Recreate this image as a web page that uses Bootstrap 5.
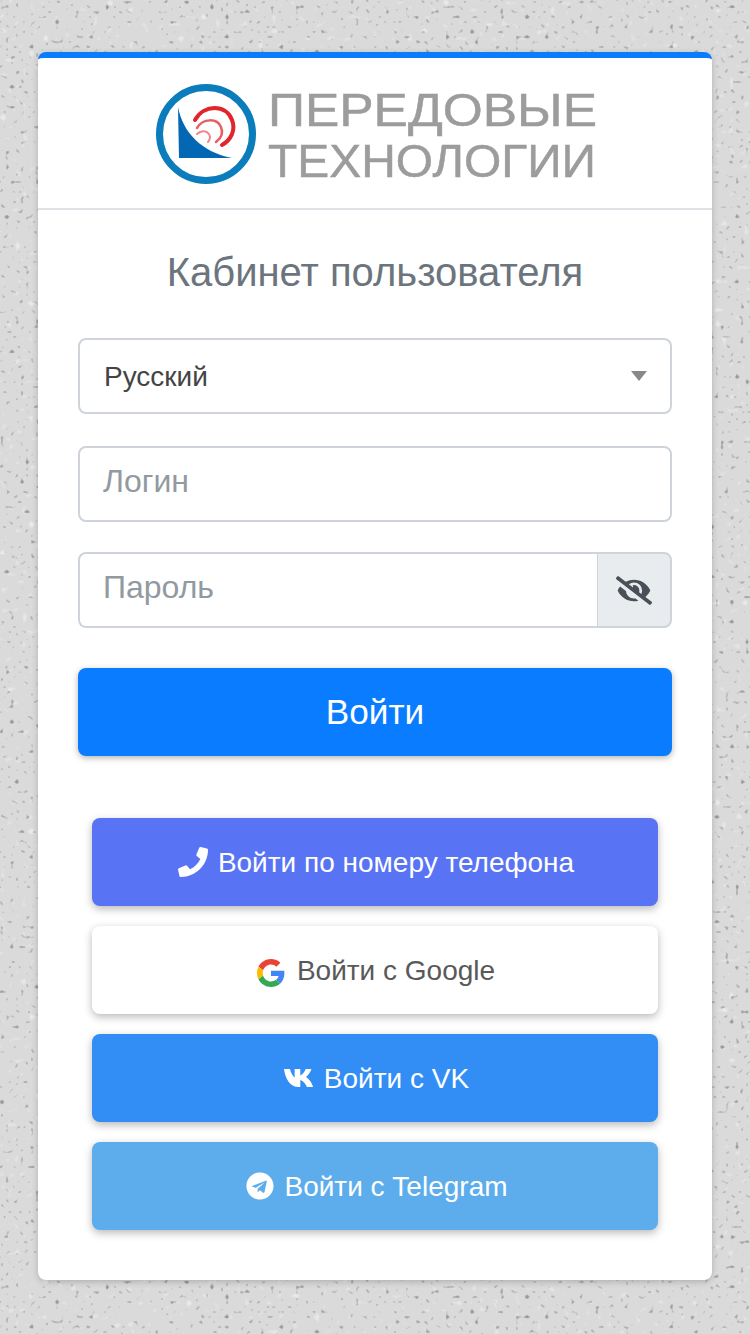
<!DOCTYPE html>
<html lang="ru">
<head>
  <meta charset="UTF-8">
  <meta name="viewport" content="width=device-width, initial-scale=1">
  <title>Кабинет пользователя</title>
  <link href="https://cdn.jsdelivr.net/npm/bootstrap@5.3.0/dist/css/bootstrap.min.css" rel="stylesheet">
  <style>
    html, body { height: 100%; }
    body {
      font-family: "Liberation Sans", Arial, sans-serif;
      background-color: #dadada;
      /* speckled concrete texture: thresholded svg noise */
      background-image: url("data:image/svg+xml,%3csvg xmlns='http://www.w3.org/2000/svg' width='750' height='1334'%3e%3cfilter id='d' color-interpolation-filters='sRGB' x='0' y='0' width='100%25' height='100%25'%3e%3cfeTurbulence type='fractalNoise' baseFrequency='.2' numOctaves='1' seed='11'/%3e%3cfeColorMatrix values='0 0 0 0 .5 0 0 0 0 .5 0 0 0 0 .5 7 0 0 0 -4.55'/%3e%3c/filter%3e%3cfilter id='l' color-interpolation-filters='sRGB' x='0' y='0' width='100%25' height='100%25'%3e%3cfeTurbulence type='fractalNoise' baseFrequency='.14' numOctaves='1' seed='4'/%3e%3cfeColorMatrix values='0 0 0 0 1 0 0 0 0 1 0 0 0 0 1 0 6 0 0 -3.9'/%3e%3c/filter%3e%3crect width='750' height='1334' filter='url(%23l)' opacity='.45'/%3e%3crect width='750' height='1334' filter='url(%23d)' opacity='.7'/%3e%3c/svg%3e");
    }
    .login-wrap { padding: 52px 38px 0; }
    .login-card {
      border: 0;
      border-top: 6px solid #0a7cff;
      border-radius: 8px;
      box-shadow: 0 2px 6px rgba(0,0,0,.2);
    }
    .login-head {
      background: #fff;
      border-bottom: 2px solid #dee2e6;
      padding: 22px 0 18px 6px;
      text-align: center;
    }
    .login-head svg { display: block; margin: 0 auto; }
    .logo-art { filter: blur(.6px); }
    .logo-text {
      font-family: "Liberation Sans", Arial, sans-serif;
      font-size: 47px;
      fill: #9c9c9c;
      stroke: #9c9c9c;
      stroke-width: .5px;
    }
    .login-body { padding: 39px 40px 50px; }
    .login-title {
      color: #6c757d;
      font-size: 40px;
      font-weight: 400;
      line-height: 46px;
      text-align: center;
      margin-bottom: 43px;
    }
    .field {
      height: 76px;
      font-size: 32px;
      padding: 0 23px 6px;
      border: 2px solid #ced4da;
      border-radius: 8px;
      color: #444;
    }
    .field::placeholder { color: #929aa1; opacity: 1; }
    .lang-select {
      font-size: 28px;
      padding: 2px 24px 0;
      margin-bottom: 32px;
      background-image: url("data:image/svg+xml,%3csvg xmlns='http://www.w3.org/2000/svg' viewBox='0 0 16 10'%3e%3cpath fill='%23888' d='M0 0h16L8 10z'/%3e%3c/svg%3e");
      background-position: right 23px center;
      background-size: 16px 10px;
    }
    .login-input { margin-bottom: 30px; }
    .eye-addon {
      width: 76px;
      height: 76px;
      justify-content: center;
      padding: 0;
      background: #e9ecef;
      border: 2px solid #ced4da;
      border-radius: 0 8px 8px 0;
    }
    .pass-group { margin-bottom: 40px; }
    .pass-group .field { border-right: 0; }
    .btn-enter {
      height: 88px;
      font-size: 35.2px;
      color: #fff;
      background: #0a7cff;
      border: 0;
      border-radius: 8px;
      box-shadow: 0 2px 6px rgba(0,0,0,.3);
      margin-bottom: 62px;
    }
    .social-list { padding: 0 14px; gap: 20px; }
    .btn-social {
      height: 88px;
      font-size: 28px;
      border: 0;
      border-radius: 8px;
      box-shadow: 0 3px 8px rgba(0,0,0,.28);
      color: #fff;
      gap: 10px;
      padding: 0 0 0 2px;
    }
    .btn-social span { margin-top: 2px; }
    .btn-phone { background: #5874f5; }
    .btn-google { background: #fff; color: #595959; gap: 12px; }
    .btn-google svg { margin-top: 6px; }
    .btn-vk { background: #328df5; }
    .btn-tg { background: #5dadec; padding-left: 4px; }
  </style>
</head>
<body>

  <div class="login-wrap">
    <div class="card login-card overflow-hidden">

      <!-- Logo -->
      <div class="login-head">
        <svg width="444" height="110" viewBox="156 80 444 110">
          <g class="logo-art">
            <circle cx="206" cy="134" r="46.5" fill="none" stroke="#0b7cbc" stroke-width="7"/>
            <path d="M178 107C183 133 202 152 232 158H179z" fill="#0467b3"/>
            <g fill="none" stroke="#e2252b" stroke-linecap="round">
              <path d="M195 120C204 104 226 104 232 120C236 130 231 140 222 145" stroke-width="4"/>
              <path d="M197 128C203 118 217 118 221 127C224 134 220 139 216 142" stroke-width="2.5" opacity=".75"/>
              <path d="M197 134C202 129 209 131 210 137C210 139 209 141 208 142" stroke-width="2" opacity=".55"/>
            </g>
            <text class="logo-text" x="268" y="125.5" textLength="329" lengthAdjust="spacingAndGlyphs">ПЕРЕДОВЫЕ</text>
            <text class="logo-text" x="268" y="177" textLength="328" lengthAdjust="spacingAndGlyphs">ТЕХНОЛОГИИ</text>
          </g>
        </svg>
      </div>

      <div class="login-body">
        <h1 class="login-title">Кабинет пользователя</h1>

        <select class="form-select field lang-select">
          <option>Русский</option>
        </select>

        <input type="text" class="form-control field login-input" placeholder="Логин">

        <div class="input-group pass-group">
          <input type="password" class="form-control field" placeholder="Пароль">
          <span class="input-group-text eye-addon">
            <svg width="36" height="29" viewBox="0 0 640 512" fill="#495057"><path d="M320 400c-75.85 0-137.25-58.71-142.9-133.11L72.2 185.82c-13.79 17.3-26.48 35.59-36.72 55.59a32.35 32.35 0 0 0 0 29.19C89.71 376.41 197.07 448 320 448c26.91 0 52.87-4 77.89-10.46L346 397.39a144.13 144.13 0 0 1-26 2.61zm313.82 58.1l-110.55-85.44a331.25 331.25 0 0 0 81.25-102.07 32.35 32.35 0 0 0 0-29.19C550.29 135.59 442.93 64 320 64a308.15 308.15 0 0 0-147.32 37.7L45.46 3.37A16 16 0 0 0 23 6.18L3.37 31.45A16 16 0 0 0 6.18 53.9l588.36 454.73a16 16 0 0 0 22.46-2.81l19.64-25.27a16 16 0 0 0-2.82-22.45zm-183.72-142l-39.3-30.38A94.75 94.75 0 0 0 416 256a94.76 94.76 0 0 0-121.31-92.21A47.65 47.65 0 0 1 304 192a46.64 46.64 0 0 1-1.54 10l-73.61-56.89A142.31 142.31 0 0 1 320 112a143.92 143.92 0 0 1 144 144c0 21.63-5.29 41.79-13.9 60.11z"/></svg>
          </span>
        </div>

        <button type="button" class="btn btn-enter w-100">Войти</button>

        <!-- Social logins -->
        <div class="d-flex flex-column social-list">
          <button type="button" class="btn btn-social btn-phone d-flex align-items-center justify-content-center">
            <svg width="30" height="30" viewBox="0 0 512 512" fill="#fff"><path d="M493.4 24.6l-104-24c-11.3-2.6-22.9 3.3-27.5 13.9l-48 112c-4.2 9.8-1.4 21.3 6.9 28l60.6 49.6c-36 76.7-98.9 140.5-177.2 177.2l-49.6-60.6c-6.8-8.3-18.2-11.1-28-6.9l-112 48C3.9 366.5-2 378.1.6 389.4l24 104C27.1 504.2 36.7 512 48 512c256.1 0 464-207.5 464-464 0-11.2-7.7-20.9-18.6-23.4z"/></svg>
            <span>Войти по номеру телефона</span>
          </button>
          <button type="button" class="btn btn-social btn-google d-flex align-items-center justify-content-center">
            <svg width="28" height="28" viewBox="0 0 48 48"><path fill="#EA4335" d="M24 9.5c3.54 0 6.71 1.22 9.21 3.6l6.85-6.85C35.9 2.38 30.47 0 24 0 14.62 0 6.51 5.38 2.56 13.22l7.98 6.19C12.43 13.72 17.74 9.5 24 9.5z"/><path fill="#4285F4" d="M46.98 24.55c0-1.57-.15-3.09-.38-4.55H24v9.02h12.94c-.58 2.96-2.26 5.48-4.78 7.18l7.73 6c4.51-4.18 7.09-10.36 7.09-17.65z"/><path fill="#FBBC05" d="M10.53 28.59c-.48-1.45-.76-2.99-.76-4.59s.27-3.14.76-4.59l-7.98-6.19C.92 16.46 0 20.12 0 24c0 3.88.92 7.54 2.56 10.78l7.97-6.19z"/><path fill="#34A853" d="M24 48c6.48 0 11.93-2.13 15.89-5.81l-7.73-6c-2.15 1.45-4.92 2.3-8.16 2.3-6.26 0-11.57-4.22-13.47-9.91l-7.98 6.19C6.51 42.62 14.62 48 24 48z"/></svg>
            <span>Войти с Google</span>
          </button>
          <button type="button" class="btn btn-social btn-vk d-flex align-items-center justify-content-center">
            <svg width="31" height="18" viewBox="0 0 31 18" fill="#fff"><path d="M1 0h6c.9 3.6 2.6 7 4.6 8.6V0h5.7v6.6C19.6 5.4 21.4 3 22.7 0h5.7c-1 3.3-3.2 6.2-5.4 8 2.6 1.6 5.7 5.1 7.1 10h-6.2c-1.2-3-3.6-6-6.6-7v7h-2C8 18 2.4 11 1 0z"/></svg>
            <span>Войти с VK</span>
          </button>
          <button type="button" class="btn btn-social btn-tg d-flex align-items-center justify-content-center">
            <svg width="28" height="28" viewBox="0 0 496 512" fill="#fff"><path d="M248 8C111 8 0 119 0 256s111 248 248 248 248-111 248-248S385 8 248 8zm121.8 169.9l-40.7 191.8c-3 13.6-11.1 16.9-22.4 10.5l-62-45.7-29.9 28.8c-3.3 3.3-6.1 6.1-12.5 6.1l4.4-63.1 114.9-103.8c5-4.4-1.1-6.9-7.7-2.5l-142 89.4-61.2-19.1c-13.3-4.2-13.6-13.3 2.8-19.7l239.1-92.2c11.1-4 20.8 2.7 17.2 19.5z"/></svg>
            <span>Войти с Telegram</span>
          </button>
        </div>
      </div>

    </div>
  </div>

  <script src="https://cdn.jsdelivr.net/npm/bootstrap@5.3.0/dist/js/bootstrap.bundle.min.js"></script>
</body>
</html>
